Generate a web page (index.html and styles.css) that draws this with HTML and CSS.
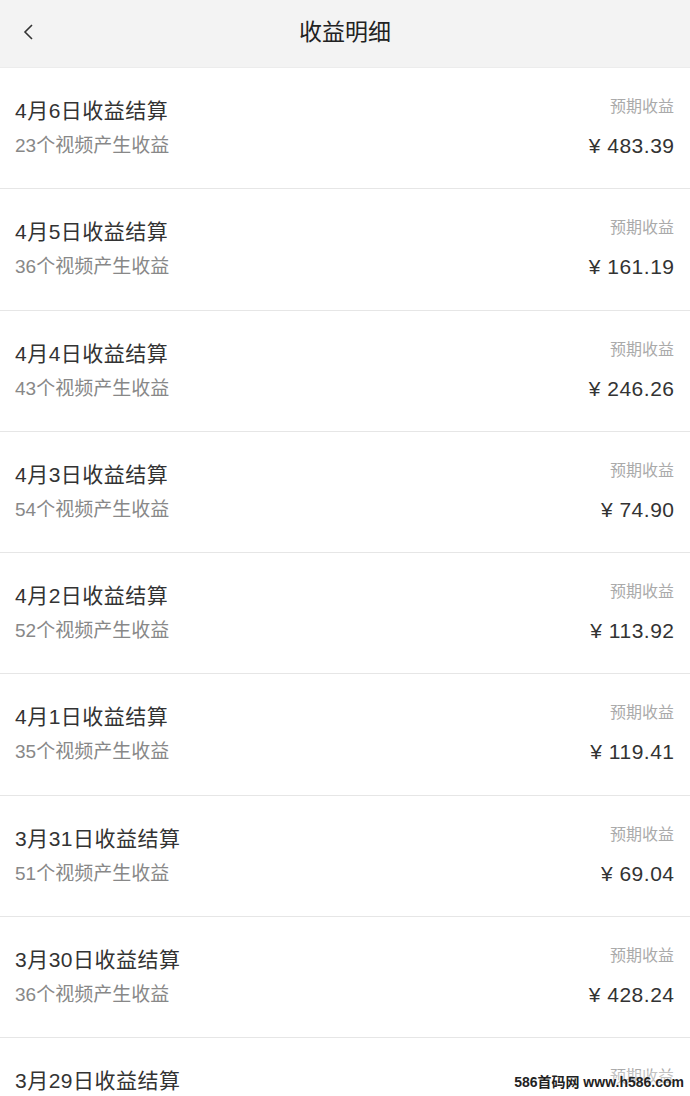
FILE: index.html
```html
<!DOCTYPE html>
<html lang="zh-CN">
<head>
    <meta charset="UTF-8">
    <meta name="viewport" content="width=device-width, initial-scale=1.0">
    <title>收益明细</title>
    <link rel="stylesheet" href="styles.css">
</head>
<body>
    <div class="header">
        <span class="back">
            <svg width="14" height="20" viewBox="0 0 14 20"><path d="M10 3 L3 10 L10 17" fill="none" stroke="#333" stroke-width="1.6"/></svg>
        </span>
        <h1>收益明细</h1>
    </div>

    <div class="list" id="list">
        <!-- rows inserted below -->
    </div>

    <div class="mark">586首码网 www.h586.com</div>

    <script>
        const rows = [
            ["4月6日", 23, "483.39"],
            ["4月5日", 36, "161.19"],
            ["4月4日", 43, "246.26"],
            ["4月3日", 54, "74.90"],
            ["4月2日", 52, "113.92"],
            ["4月1日", 35, "119.41"],
            ["3月31日", 51, "69.04"],
            ["3月30日", 36, "428.24"],
            ["3月29日", 40, "88.12"]
        ];

        const list = document.getElementById('list');
        for (let r of rows) {
            list.innerHTML += `
                <div class="row">
                    <div class="left">
                        <div class="title">${r[0]}收益结算</div>
                        <div class="sub">${r[1]}个视频产生收益</div>
                    </div>
                    <div class="right">
                        <div class="label">预期收益</div>
                        <div class="amount">¥ ${r[2]}</div>
                    </div>
                </div>
            `;
        }
    </script>
</body>
</html>
```

FILE: styles.css
```css
body {
    margin: 0;
    font-family: "Liberation Sans", "Noto Sans CJK SC", sans-serif;
    background-color: #fff;
    color: #333;
    height: 1096px;
    overflow: hidden;
}
.header {
    height: 68px;
    box-sizing: border-box;
    padding-bottom: 7px;
    background-color: #f3f3f3;
    display: flex;
    align-items: center;
    justify-content: center;
    position: relative;
    border-bottom: 1px solid #ececec;
}
.header h1 {
    margin: 0;
    font-size: 23px;
    font-weight: 400;
    color: #222;
}
.back {
    position: absolute;
    left: 22px;
    top: 22px;
}
.row {
    height: 121.3px;
    box-sizing: border-box;
    border-bottom: 1px solid #e6e6e6;
    padding: 29px 16px 0 15px;
    display: flex;
    justify-content: space-between;
}
.title {
    font-size: 21px;
    line-height: 28px;
    letter-spacing: 0.5px;
    color: #333;
}
.sub {
    font-size: 19px;
    line-height: 24px;
    margin-top: 9px;
    color: #888;
}
.right {
    text-align: right;
}
.label {
    font-size: 16px;
    line-height: 22px;
    margin-top: -1px;
    color: #aaa;
}
.amount {
    font-size: 21px;
    line-height: 28px;
    letter-spacing: 0.5px;
    margin-top: 14px;
    margin-right: -0.5px;
    color: #333;
}
.mark {
    position: absolute;
    right: 6px;
    top: 1071px;
    font-size: 14px;
    font-weight: 700;
    color: #222;
    background: rgba(255, 255, 255, 0.3);
}
```
